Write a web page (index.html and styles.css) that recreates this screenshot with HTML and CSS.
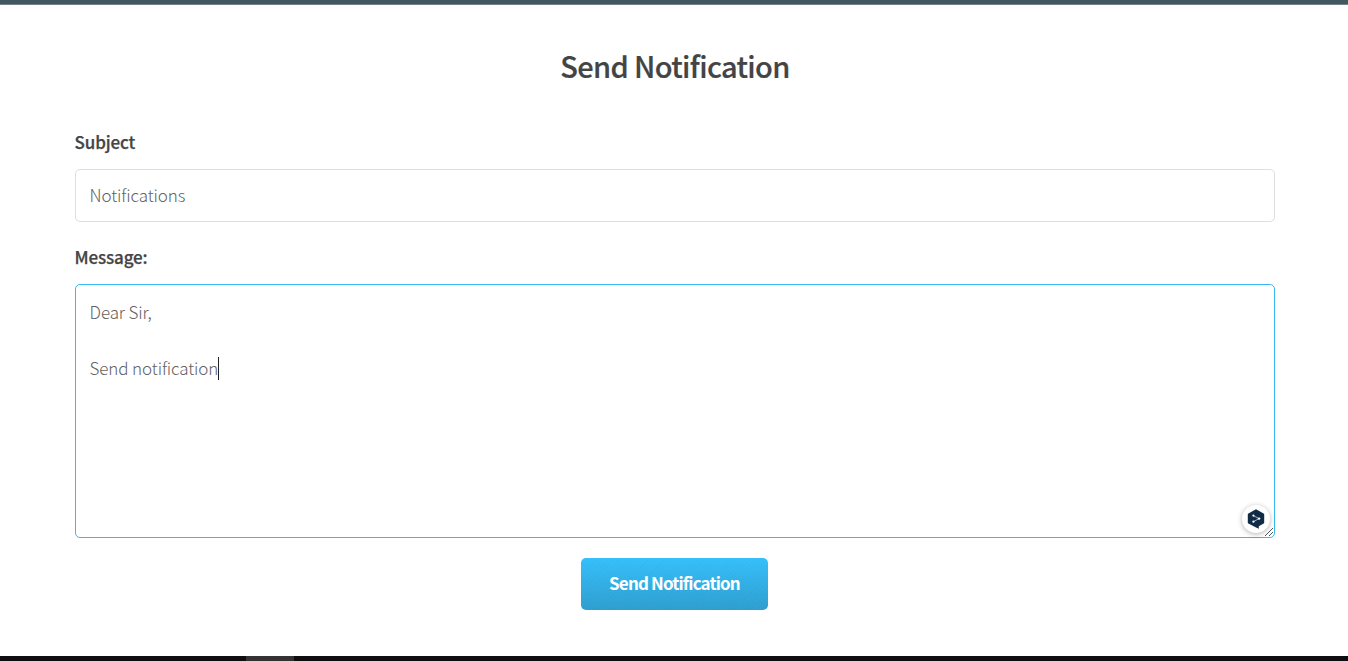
FILE: index.html
```html
<!DOCTYPE html>
<html lang="en">
<head>
<meta charset="utf-8">
<title>Send Notification</title>
<link rel="stylesheet" href="styles.css">
</head>
<body>
<div class="page">
  <div class="topbar"></div>
  <main class="content">
    <h1 class="title">Send Notification</h1>
    <form class="form">
      <label class="label" for="subject">Subject</label>
      <input class="field subject" id="subject" type="text" value="Notifications">
      <label class="label" for="message">Message:</label>
      <div class="message-wrap">
        <textarea class="field message" id="message">Dear Sir,

Send notification</textarea>
        <span class="caret"></span>
        <span class="assistant">
          <svg width="18" height="20" viewBox="0 0 18 20">
            <path d="M9 0.2 L16.6 4.4 Q17.2 4.8 17.2 5.5 V13.4 Q17.2 14.1 16.6 14.5 L11.8 17.2 V19.8 L8.6 18.2 L1.4 14.5 Q.8 14.1 .8 13.4 V5.5 Q.8 4.8 1.4 4.4 Z" fill="#0f2b46"/>
            <path d="M6.4 6.7 L12 9.6 L6.4 12.7" fill="none" stroke="#b9c3cd" stroke-width=".9"/>
            <g fill="#fff"><circle cx="6.4" cy="6.6" r="1.1"/><circle cx="12.1" cy="9.6" r="1.2"/><circle cx="6.4" cy="12.7" r="1.1"/></g>
          </svg>
        </span>
        <svg class="grip" width="10" height="10" viewBox="0 0 10 10"><path d="M1 9 L9 1 M5 9 L9 5" stroke="#555" stroke-width="1" fill="none"/></svg>
      </div>
      <button class="submit" type="button">Send Notification</button>
    </form>
  </main>
  <div class="taskbar"><span class="task"></span></div>
</div>
</body>
</html>
```
FILE: styles.css
```css
* { box-sizing: border-box; }
body { margin: 0; background: #fff; color: #444; font-family: "Noto Sans CJK SC", "Noto Sans", sans-serif; }
.page { height: 661px; display: flex; flex-direction: column; overflow: hidden; }
.topbar { height: 5px; flex: none; background: #435761; border-bottom: 1px solid #72818a; }
.content { flex: 1; width: 1200px; margin-left: 75px; }
.title { margin: 37px 0 45px; font-size: 29px; line-height: 46px; font-weight: 500; text-align: center; letter-spacing: -0.63px; -webkit-text-stroke: .2px #444; }
.form { display: flex; flex-direction: column; }
.label { font-size: 17px; line-height: 18px; font-weight: 500; margin-bottom: 18px; letter-spacing: -0.15px; text-indent: -0.4px; -webkit-text-stroke: .25px #444; }
.field { display: block; width: 100%; border: 1px solid #dedede; border-radius: 5px; background: #fff; color: #626262; font-family: inherit; font-weight: 200; font-size: 17px; line-height: 28px; letter-spacing: -0.12px; outline: none; padding: 0 13.6px; }
.subject { height: 53px; margin-bottom: 26px; padding-bottom: 2px; }
.message-wrap { position: relative; height: 254px; margin-bottom: 20px; }
.message { height: 254px; padding-top: 13px; border-color: #37b8f0; resize: none; overflow: hidden; }
.caret { position: absolute; left: 143px; top: 73px; width: 1px; height: 23px; background: #222; }
.assistant { position: absolute; right: 5px; bottom: 5px; width: 28px; height: 28px; border-radius: 50%; background: #fff; box-shadow: 0 1px 5px rgba(0,0,0,.3); display: flex; align-items: center; justify-content: center; }
.grip { position: absolute; right: 1px; bottom: 1px; }
.submit { align-self: center; width: 187px; height: 52px; margin-right: 1px; border: 0; border-radius: 5px; padding: 0 0 3px; color: #fff; font-family: inherit; font-size: 17px; font-weight: 700; letter-spacing: -0.85px; background: repeating-linear-gradient(45deg, rgba(0,40,80,.012) 0 1px, transparent 1px 3px), repeating-linear-gradient(-45deg, rgba(0,40,80,.012) 0 1px, transparent 1px 4px), linear-gradient(#37c0fb, #2f9fd0); }
.taskbar { flex: none; height: 5px; background: #0f0d0f; padding-left: 246px; }
.task { display: block; width: 48px; height: 5px; background: #343334; }
```
